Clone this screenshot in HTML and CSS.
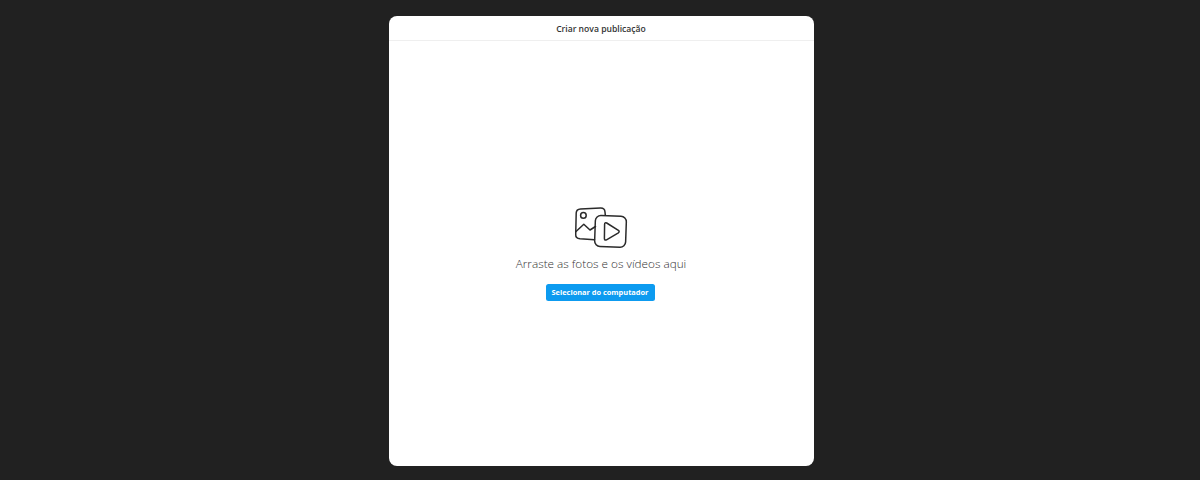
FILE: index.html
```html
<!DOCTYPE html>
<html lang="pt">
<head>
<meta charset="utf-8">
<title>Criar nova publicação</title>
<link rel="stylesheet" href="styles.css">
</head>
<body>
<main class="modal">
  <header class="modal-head">Criar nova publicação</header>
  <section class="modal-body">
    <svg class="media-icon" width="54" height="42" viewBox="0 0 54 42" fill="none" stroke="#2b2b2b" stroke-width="1.5" stroke-linecap="round" stroke-linejoin="round">
      <path d="M20.5 32.8 L6 31.8 C3.2 31.5 1.6 30 1.7 27.5 L2.2 6 C2.3 3.5 4 2 6.5 1.9 L26.5 1.1 C29.3 1 30.8 2.4 31 5 L31.3 8.3"/>
      <circle cx="9.4" cy="8.4" r="2.8"/>
      <path d="M2 24.5 L9.8 17.2 L16 23 L21.5 19.5"/>
      <rect x="21" y="8.8" width="31" height="31" rx="5.5" transform="rotate(2 36 24)"/>
      <path d="M30.6 17.2 C30.6 15.8 31.6 15.3 32.7 16 L44.4 23.4 C45.4 24.1 45.4 25.1 44.4 25.8 L32.5 32.8 C31.3 33.5 30.4 33 30.4 31.6 Z"/>
    </svg>
    <p class="drop-text">Arraste as fotos e os vídeos aqui</p>
    <button class="pick-btn" type="button">Selecionar do computador</button>
  </section>
</main>
</body>
</html>
```
FILE: styles.css
```css
html, body {
  margin: 0;
  height: 100%;
}
body {
  background: #212121;
  font-family: "Open Sans", "Liberation Sans", sans-serif;
  display: flex;
  justify-content: center;
  padding-top: 16px;
  padding-left: 2px;
  box-sizing: border-box;
}
.modal {
  width: 425px;
  height: 450px;
  background: #fff;
  border-radius: 8px;
  display: flex;
  flex-direction: column;
  overflow: hidden;
}
.modal-head {
  height: 25px;
  box-sizing: border-box;
  border-bottom: 1px solid #efefef;
  text-align: center;
  font-size: 8.6px;
  font-weight: 600;
  line-height: 26px;
  color: #333;
}
.modal-body {
  flex: 1;
  display: flex;
  flex-direction: column;
  align-items: center;
  padding-top: 166px;
}
.media-icon {
  display: block;
}
.drop-text {
  margin: 6px 0 0;
  font-size: 11.75px;
  font-weight: 300;
  line-height: 17px;
  color: #333;
}
.pick-btn {
  margin: 12px 2px 0 0;
  width: 109px;
  height: 17px;
  padding: 0;
  border: 0;
  border-radius: 2.5px;
  background: #0d9bf0;
  color: #fff;
  font-family: inherit;
  font-size: 7.4px;
  font-weight: 700;
  line-height: 17px;
}
```
